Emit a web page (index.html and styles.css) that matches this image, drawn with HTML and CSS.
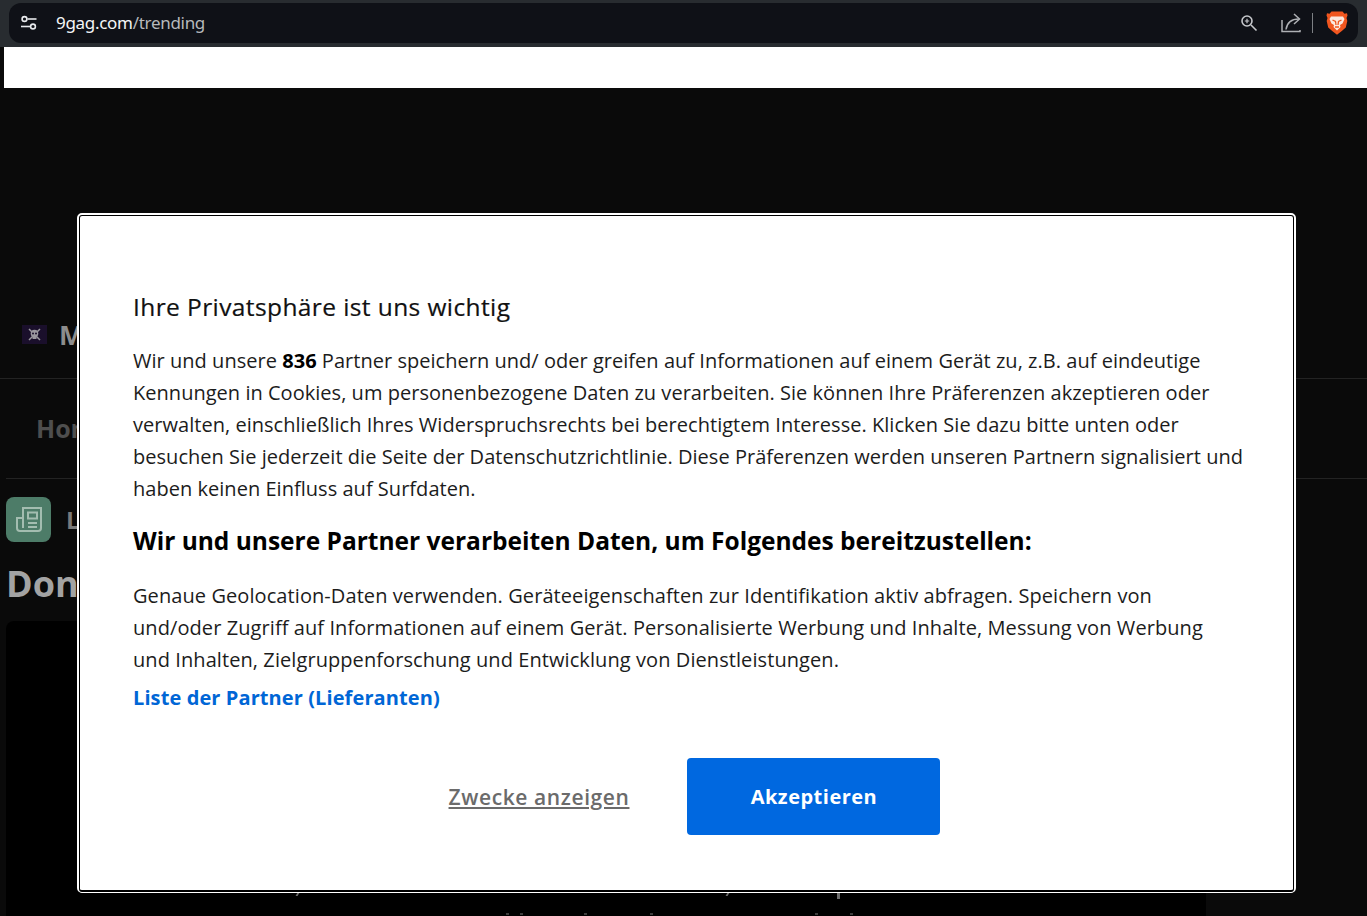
FILE: index.html
```html
<!DOCTYPE html>
<html>
<head>
    <title>9gag.com/trending</title>
    <meta name="viewport" content="width=device-width, initial-scale=1.0">
    <link rel="stylesheet" href="styles.css">
</head>
<body>
<div id="toolbar">
    <div id="urlbar">
        <svg class="tune" width="18" height="18" viewBox="0 0 18 18" fill="none" stroke="#e8eaed" stroke-width="1.6">
            <circle cx="4.500" cy="5" r="2.400"/>
            <path d="M7.500 5h9"/>
            <circle cx="13" cy="12.500" r="2.400"/>
            <path d="M1 12.500h9"/>
        </svg>
        <div id="address"><span class="host">9gag.com</span>/trending</div>
        <svg class="zoomicon" width="18" height="18" viewBox="0 0 18 18" fill="none" stroke="#c6c8cc" stroke-width="1.6">
            <circle cx="7" cy="7" r="5"/>
            <path d="M11 11l5.500 5.500"/>
            <path d="M4.800 7h4.400M7 4.800v4.400" stroke-width="1.200"/>
        </svg>
        <svg class="share" width="22" height="20" viewBox="0 0 22 20" fill="none" stroke="#aeb0b4" stroke-width="1.500">
            <path d="M2 7v11.500h18v-1.500"/>
            <path d="M6 16.500c1-6.500 5-10.500 13-10.500"/>
            <path d="M14 1l5.500 5-5.500 5"/>
        </svg>
        <div class="divider"></div>
        <svg class="brave" width="22" height="24" viewBox="0 0 22 24">
            <path d="M5.500 .5h11l2 2.200 2.500-.4 .5 2.200-1 2.500 .8 3-1.500 6.500-4 3.500-4.800 3.800-4.800-3.800-4-3.500-1.500-6.500 .8-3-1-2.500 .5-2.200 2.500 .4z" fill="#f1561f"/>
            <path d="M5 5.500h12l1.500 2.500-2 4.500-2.500 1.500 .5 2-3.500 3.500-3.500-3.500 .5-2-2.500-1.500-2-4.500z" fill="#fbe9e0"/>
            <path d="M6.500 9l3 1.500.5 3.500M15.500 9l-3 1.500-.5 3.500M9 16h4" stroke="#f1561f" stroke-width="1.300" fill="none"/>
        </svg>
    </div>
</div>
<div id="adstrip"></div>

<div id="page">
    <div class="topgap"></div>
    <div id="sitebar">
        <div class="skull">
            <svg width="15" height="15" viewBox="0 0 15 15" fill="#9a979e">
                <path d="M2 2l11 11M13 2L2 13" stroke="#9a979e" stroke-width="1.500"/>
                <circle cx="7.500" cy="6.500" r="3.800"/>
                <rect x="5.500" y="9" width="4" height="3"/>
                <circle cx="6" cy="6.500" r="1" fill="#1a0f2b"/>
                <circle cx="9" cy="6.500" r="1" fill="#1a0f2b"/>
            </svg>
        </div>
        <span class="sitename">M</span>
    </div>
    <div id="tabs"><span class="tab">Home</span></div>
    <div id="channel">
        <div class="newsicon">
            <svg width="28" height="27" viewBox="0 0 28 27" fill="none" stroke="#a3bdb0" stroke-width="2">
                <path d="M8 12H2v10a3 3 0 0 0 3 3h18a3 3 0 0 0 3-3V2H8v20"/>
                <rect x="13" y="6.500" width="9" height="6"/>
                <path d="M13 17h9M13 21h9"/>
            </svg>
        </div>
        <span class="channelname">L</span>
    </div>
    <h1 id="posttitle">Don</h1>
    <div id="postcard">
        <div class="marks">
            <i class="mark slant m1"></i>
            <i class="mark slant m2"></i>
            <i class="mark m3"></i>
        </div>
        <div class="tips">
            <i class="tip t1"></i>
            <i class="tip t2"></i>
            <i class="tip t3"></i>
            <i class="tip t4"></i>
            <i class="tip t5"></i>
            <i class="tip t6"></i>
        </div>
    </div>
</div>

<div id="consent">
    <div id="consentinner">
        <h2 class="title">Ihre Privatsphäre ist uns wichtig</h2>
        <p class="body first">Wir und unsere <b>836</b> Partner speichern und/ oder greifen auf Informationen auf einem Gerät zu, z.B. auf eindeutige<br>Kennungen in Cookies, um personenbezogene Daten zu verarbeiten. Sie können Ihre Präferenzen akzeptieren oder<br>verwalten, einschließlich Ihres Widerspruchsrechts bei berechtigtem Interesse. Klicken Sie dazu bitte unten oder<br>besuchen Sie jederzeit die Seite der Datenschutzrichtlinie. Diese Präferenzen werden unseren Partnern signalisiert und<br>haben keinen Einfluss auf Surfdaten.</p>
        <h3 class="subtitle">Wir und unsere Partner verarbeiten Daten, um Folgendes bereitzustellen:</h3>
        <p class="body second">Genaue Geolocation-Daten verwenden. Geräteeigenschaften zur Identifikation aktiv abfragen. Speichern von<br>und/oder Zugriff auf Informationen auf einem Gerät. Personalisierte Werbung und Inhalte, Messung von Werbung<br>und Inhalten, Zielgruppenforschung und Entwicklung von Dienstleistungen.</p>
        <a class="partners" href="#">Liste der Partner (Lieferanten)</a>
        <div id="actions">
            <a class="purposes" href="#">Zwecke anzeigen</a>
            <button class="accept">Akzeptieren</button>
        </div>
    </div>
</div>
</body>
</html>
```
FILE: styles.css
```css
html, body {
    margin: 0;
    height: 916px;
    overflow: hidden;
    background: #0a0a0a;
    font-family: "Open Sans", "Noto Sans", sans-serif;
}

/* browser chrome */
#toolbar {
    height: 47px;
    box-sizing: border-box;
    padding: 3px 9px 4px 9px;
    background: #282c30;
}
#urlbar {
    height: 40px;
    display: flex;
    align-items: center;
    background: #0f1117;
    border-radius: 12px;
    padding: 0 10px 0 11px;
}
#address {
    margin-left: 18px;
    margin-bottom: 2px;
    flex: 1;
    font-family: "Noto Sans", sans-serif;
    font-size: 17px;
    letter-spacing: -0.3px;
    color: #b7b9bc;
}
.host {color: #f4f5f6;}
.zoomicon {margin-right: 22px;}
.divider {
    width: 1px;
    height: 20px;
    margin: 0 13px 0 10px;
    background: #7d8084;
}

#adstrip {
    height: 41px;
    margin-left: 4px;
    background: #ffffff;
}

/* dimmed page */
#page {
    height: 828px;
    overflow: hidden;
    background: #0a0a0a;
}
.topgap {height: 226px;}
#sitebar {
    height: 40px;
    padding: 0 0 24px 22px;
    display: flex;
    align-items: center;
    border-bottom: 1px solid #232323;
}
.skull {
    width: 25px;
    height: 19px;
    display: flex;
    align-items: center;
    justify-content: center;
    background: #1a0f2b;
}
.sitename {
    margin-left: 12px;
    font-size: 27px;
    font-weight: 700;
    color: #8d8d8d;
}
#tabs {
    height: 97px;
    padding: 0 0 2px 30px;
    display: flex;
    align-items: center;
    margin-left: 6px;
    border-bottom: 1px solid #232323;
}
.tab {
    font-size: 25px;
    font-weight: 700;
    color: #4e4e4e;
}
#channel {
    display: flex;
    align-items: center;
    margin: 18px 0 0 6px;
}
.newsicon {
    width: 45px;
    height: 45px;
    display: flex;
    align-items: center;
    justify-content: center;
    background: #4d7c68;
    border-radius: 8px;
}
.channelname {
    margin-left: 15px;
    font-size: 24px;
    font-weight: 700;
    color: #7a7a7a;
}
#posttitle {
    margin: 17px 0 0 6px;
    font-size: 36px;
    line-height: 50px;
    font-weight: 700;
    color: #a3a3a3;
}
#postcard {
    height: 300px;
    margin: 12px 161px 0 6px;
    background: #000000;
    border-radius: 8px 8px 0 0;
}
.marks {
    display: flex;
    padding: 270px 0 0 291px;
}
.mark {
    display: block;
    width: 2px;
    height: 5px;
    background: #6d6d6d;
}
.slant {transform: skewX(-30deg);}
.m2 {margin-left: 428px;}
.m3 {margin-left: 108px; height: 8px; width: 3px;}
.tips {
    display: flex;
    padding: 14px 0 0 500px;
}
.tip {
    display: block;
    width: 3px;
    height: 2px;
    background: #3c3c3c;
}
.t2 {margin-left: 11px;}
.t3 {margin-left: 61px;}
.t4 {margin-left: 63px;}
.t5 {margin-left: 162px;}
.t6 {margin-left: 32px;}

/* consent dialog */
#consent {
    position: absolute;
    left: 77px;
    top: 213px;
    width: 1219px;
    height: 680px;
    box-sizing: border-box;
    background: #ffffff;
    border: 2px solid #ffffff;
    border-bottom-width: 1px;
    border-radius: 5px;
}
#consentinner {
    height: 100%;
    box-sizing: border-box;
    border: 1px solid #000000;
    border-bottom-width: 2px;
    border-radius: 3px;
    padding: 73px 51px 0 53px;
    color: #1c1c1c;
}
.title {
    margin: 0;
    font-size: 24.5px;
    line-height: 36px;
    font-weight: 400;
    letter-spacing: 0.4px;
    color: #111111;
    -webkit-text-stroke: 0.2px #111111;
}
.body {
    margin: 0;
    font-size: 20px;
    line-height: 32px;
    letter-spacing: 0.03px;
    white-space: nowrap;
}
.body.first {margin-top: 20px;}
.body.second {letter-spacing: 0.08px;}
.body b {font-weight: 700; color: #000000;}
.subtitle {
    margin: 20px 0 23px 0;
    font-size: 24.5px;
    line-height: 32px;
    font-weight: 700;
    color: #000000;
}
.partners {
    display: block;
    margin-top: 7px;
    font-size: 20px;
    line-height: 30px;
    font-weight: 700;
    letter-spacing: 0.1px;
    color: #0066d6;
    text-decoration: none;
}
#actions {
    display: flex;
    align-items: center;
    justify-content: center;
    margin-top: 45px;
    padding-left: 14px;
}
.purposes {
    font-size: 21px;
    font-weight: 600;
    letter-spacing: 0.6px;
    color: #6b6b6b;
}
.accept {
    width: 253px;
    height: 77px;
    margin-left: 58px;
    border: 0;
    border-radius: 4px;
    background: #0068e0;
    color: #ffffff;
    font-family: "Open Sans", sans-serif;
    font-size: 20px;
    font-weight: 700;
    letter-spacing: 0.5px;
}
```
